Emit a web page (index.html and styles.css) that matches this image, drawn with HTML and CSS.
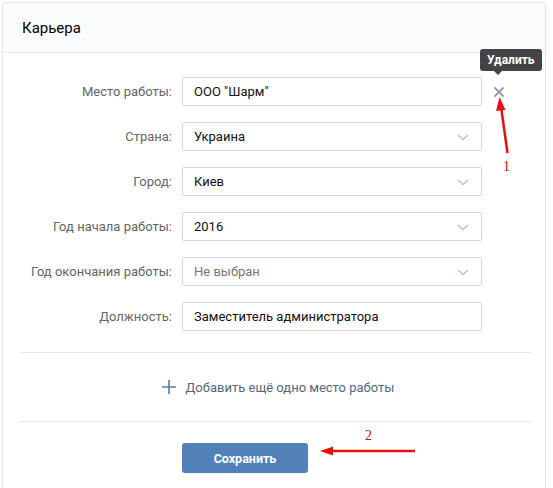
FILE: index.html
```html
<!DOCTYPE html>
<html lang="ru">
<head>
<meta charset="utf-8">
<link rel="stylesheet" href="styles.css">
</head>
<body>
<div class="card">
  <div class="card-header">Карьера</div>
  <div class="form">
    <div class="row">
      <label class="label">Место работы:</label>
      <div class="control">
        <div class="input">ООО "Шарм"</div>
        <div class="delete">
          <svg width="12" height="12" viewBox="0 0 12 12"><path d="M1.5 1.5 L10.5 10.5 M10.5 1.5 L1.5 10.5" stroke="#8d9db3" stroke-width="1.8" fill="none"/></svg>
          <div class="tooltip">Удалить</div>
        </div>
      </div>
    </div>
    <div class="row">
      <label class="label">Страна:</label>
      <div class="control">
        <div class="input select">Украина<svg class="chev" width="12" height="7" viewBox="0 0 12 7"><path d="M1 1 L6 5.5 L11 1" stroke="#b8c1cc" stroke-width="1.5" fill="none"/></svg></div>
      </div>
    </div>
    <div class="row">
      <label class="label">Город:</label>
      <div class="control">
        <div class="input select">Киев<svg class="chev" width="12" height="7" viewBox="0 0 12 7"><path d="M1 1 L6 5.5 L11 1" stroke="#b8c1cc" stroke-width="1.5" fill="none"/></svg></div>
      </div>
    </div>
    <div class="row">
      <label class="label">Год начала работы:</label>
      <div class="control">
        <div class="input select">2016<svg class="chev" width="12" height="7" viewBox="0 0 12 7"><path d="M1 1 L6 5.5 L11 1" stroke="#b8c1cc" stroke-width="1.5" fill="none"/></svg></div>
      </div>
    </div>
    <div class="row">
      <label class="label">Год окончания работы:</label>
      <div class="control">
        <div class="input select placeholder">Не выбран<svg class="chev" width="12" height="7" viewBox="0 0 12 7"><path d="M1 1 L6 5.5 L11 1" stroke="#b8c1cc" stroke-width="1.5" fill="none"/></svg></div>
      </div>
    </div>
    <div class="row">
      <label class="label">Должность:</label>
      <div class="control">
        <div class="input">Заместитель администратора</div>
      </div>
    </div>
  </div>
  <div class="sep"></div>
  <div class="add">
    <svg width="14" height="14" viewBox="0 0 14 14"><path d="M7 0 V14 M0 7 H14" stroke="#5d7ea3" stroke-width="1.6" fill="none"/></svg>
    <span>Добавить ещё одно место работы</span>
  </div>
  <div class="sep"></div>
  <div class="actions">
    <button class="btn">Сохранить</button>
  </div>
</div>
<svg class="annot" width="553" height="488" viewBox="0 0 553 488">
  <path d="M507.5 153 L501.5 110" stroke="#e8100f" stroke-width="2.5" fill="none"/>
  <path d="M499.5 97 L496 111 L505.5 110 Z" fill="#e8100f"/>
  <text x="503" y="171" class="num">1</text>
  <path d="M415 451 L330 451" stroke="#e8100f" stroke-width="2.5" fill="none"/>
  <path d="M320 451 L333 446.5 L333 455.5 Z" fill="#e8100f"/>
  <text x="365" y="440" class="num">2</text>
</svg>
</body>
</html>
```
FILE: styles.css
```css
html, body {
  margin: 0;
  padding: 0;
  background: #fff;
}
body {
  font-family: Roboto, "Open Sans", Arial, sans-serif;
  font-size: 13px;
  color: #000;
  width: 553px;
  height: 488px;
  overflow: hidden;
  position: relative;
}
.card {
  margin: 2px 0 0 2px;
  width: 544px;
  height: 486px;
  box-sizing: border-box;
  border: 1px solid #e3e4e8;
  border-bottom: 0;
  border-radius: 2px 2px 0 0;
  background: #fff;
}
.card-header {
  height: 49px;
  line-height: 50px;
  padding-left: 19px;
  background: #fafbfc;
  border-bottom: 1px solid #e7e8ec;
  font-size: 15px;
  color: #000;
}
.form {
  padding-top: 24px;
  display: flex;
  flex-direction: column;
  gap: 16px;
}
.row {
  display: flex;
  align-items: center;
  height: 29px;
}
.label {
  width: 179px;
  text-align: right;
  color: #656565;
  padding-right: 10px;
  box-sizing: border-box;
}
.control {
  display: flex;
  align-items: center;
  position: relative;
}
.input {
  width: 300px;
  height: 29px;
  box-sizing: border-box;
  border: 1px solid #d3d9de;
  border-radius: 2px;
  padding: 0 11px;
  line-height: 27px;
  color: #111;
  position: relative;
}
.select .chev {
  position: absolute;
  right: 12px;
  top: 11px;
}
.placeholder {
  color: #777;
}
.delete {
  position: relative;
  margin-left: 11px;
  width: 12px;
  height: 12px;
  display: flex;
}
.tooltip {
  position: absolute;
  left: -13px;
  top: -37px;
  background: #434446;
  color: #fff;
  font-weight: bold;
  font-size: 12px;
  height: 22px;
  line-height: 22px;
  padding: 0 7px;
  border-radius: 3px;
  white-space: nowrap;
}
.tooltip::after {
  content: "";
  position: absolute;
  left: 14px;
  bottom: -4px;
  border-left: 4px solid transparent;
  border-right: 4px solid transparent;
  border-top: 4px solid #434446;
}
.sep {
  height: 1px;
  background: #e7e8ec;
  margin: 0 14px 0 17px;
}
.form + .sep {
  margin-top: 21px;
}
.add {
  height: 68px;
  display: flex;
  align-items: center;
  justify-content: center;
  gap: 10px;
  color: #55677d;
  padding-left: 8px;
  font-size: 13px;
}
.actions {
  padding-top: 21px;
  padding-left: 179px;
}
.btn {
  width: 126px;
  height: 30px;
  border: 0;
  border-radius: 3px;
  background: #5181b8;
  color: #fff;
  font-family: Roboto, Arial, sans-serif;
  font-weight: bold;
  font-size: 12.5px;
}
.annot {
  position: absolute;
  left: 0;
  top: 0;
  pointer-events: none;
}
.num {
  font-family: "Liberation Serif", serif;
  font-size: 14px;
  fill: #c0100f;
}
```
